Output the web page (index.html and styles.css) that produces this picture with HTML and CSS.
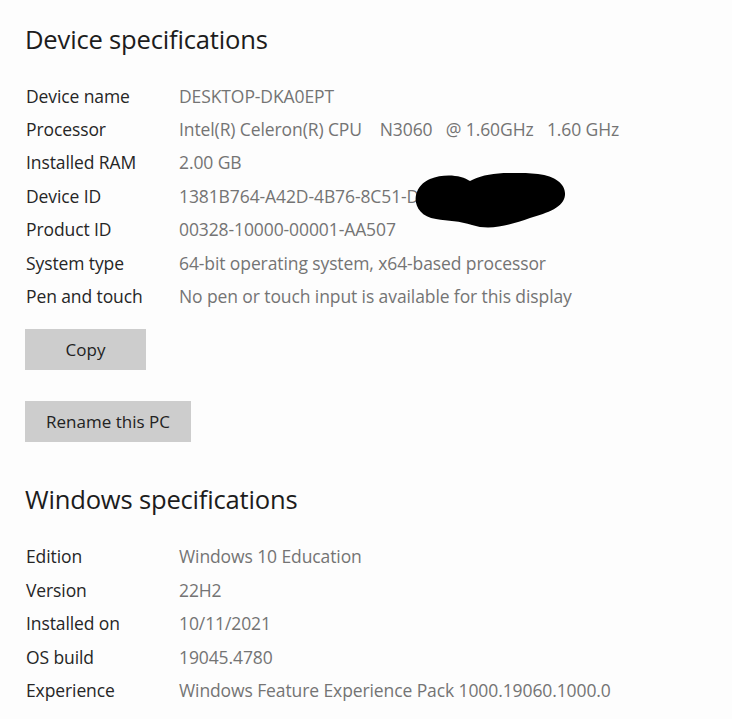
FILE: index.html
```html
<!DOCTYPE html>
<html>
<head>
<meta charset="utf-8">
<link rel="stylesheet" href="styles.css">
</head>
<body>
<div class="page">
  <h1 class="title">Device specifications</h1>
  <dl class="specs">
    <div class="row"><dt>Device name</dt><dd>DESKTOP-DKA0EPT</dd></div>
    <div class="row"><dt>Processor</dt><dd>Intel(R) Celeron(R) CPU    N3060   @ 1.60GHz   1.60 GHz</dd></div>
    <div class="row"><dt>Installed RAM</dt><dd>2.00 GB</dd></div>
    <div class="row redacted"><dt>Device ID</dt><dd>1381B764-A42D-4B76-8C51-D</dd><svg class="blob" viewBox="0 0 152 56" width="152" height="56"><path d="M16 6 C30 0 48 2 56 8 C70 0 96 -2 124 1 C142 3 152 12 151 22 C150 34 134 40 116 45 C96 52 76 58 58 52 C46 48 34 48 22 46 C6 44 0 32 2 22 C4 14 9 9 16 6 Z" fill="#000"/></svg></div>
    <div class="row"><dt>Product ID</dt><dd>00328-10000-00001-AA507</dd></div>
    <div class="row"><dt>System type</dt><dd>64-bit operating system, x64-based processor</dd></div>
    <div class="row"><dt>Pen and touch</dt><dd>No pen or touch input is available for this display</dd></div>
  </dl>
  <div class="actions">
    <button class="btn btn-copy">Copy</button>
    <button class="btn btn-rename">Rename this PC</button>
  </div>
  <h1 class="title title-win">Windows specifications</h1>
  <dl class="specs">
    <div class="row"><dt>Edition</dt><dd>Windows 10 Education</dd></div>
    <div class="row"><dt>Version</dt><dd>22H2</dd></div>
    <div class="row"><dt>Installed on</dt><dd>10/11/2021</dd></div>
    <div class="row"><dt>OS build</dt><dd>19045.4780</dd></div>
    <div class="row"><dt>Experience</dt><dd>Windows Feature Experience Pack 1000.19060.1000.0</dd></div>
  </dl>
</div>
</body>
</html>
```
FILE: styles.css
```css
html, body {
  margin: 0;
  padding: 0;
  background: #fdfdfd;
}
body {
  font-family: "Open Sans", "Noto Sans", "Liberation Sans", sans-serif;
  color: #222;
}
.page {
  padding: 20px 0 0 25px;
}
.title {
  margin: 0 0 19px 0;
  font-size: 25.6px;
  font-weight: 400;
  line-height: 40px;
  color: #1c1c1c;
  letter-spacing: -0.2px;
}
.title-win {
  margin-top: 38px;
  margin-bottom: 20px;
}
.specs {
  margin: 0;
  display: flex;
  flex-direction: column;
}
.row {
  display: flex;
  height: 33.4px;
  align-items: center;
  font-size: 17.5px;
  letter-spacing: -0.1px;
}
.row dt {
  width: 153px;
  padding-left: 1px;
  color: #262626;
  flex: none;
}
.row dd {
  margin: 0;
  color: #747474;
  white-space: pre;
}
.redacted {
  position: relative;
}
.blob {
  position: absolute;
  left: 389px;
  top: -6px;
}
.actions {
  margin-top: 16px;
  display: flex;
  flex-direction: column;
  align-items: flex-start;
  gap: 31px;
}
.btn {
  border: none;
  background: #cdcdcd;
  height: 41px;
  font-family: inherit;
  font-size: 17px;
  color: #222;
  padding: 0;
}
.btn-copy {
  width: 121px;
}
.btn-rename {
  width: 166px;
}
```
